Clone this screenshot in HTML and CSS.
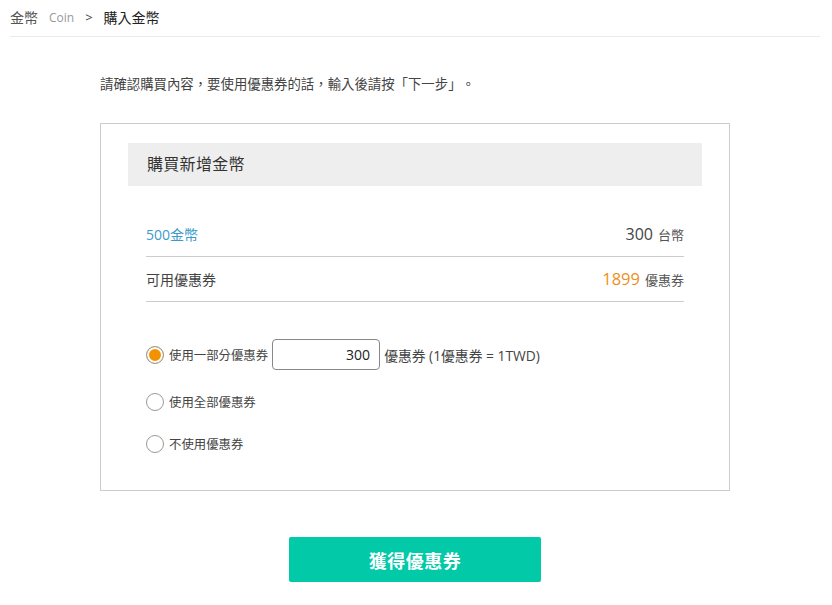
FILE: index.html
```html
<!DOCTYPE html>
<html lang="zh-Hant">
<head>
<meta charset="utf-8">
<title>購入金幣</title>
<link rel="stylesheet" href="styles.css">
</head>
<body>
<nav class="breadcrumb">
  <span class="crumb">金幣</span>
  <span class="crumb crumb-en">Coin</span>
  <span class="crumb crumb-sep">&gt;</span>
  <span class="crumb crumb-current">購入金幣</span>
</nav>
<main class="content">
  <p class="intro">請確認購買內容，要使用優惠券的話，輸入後請按「下一步」。</p>
  <section class="box">
    <h2 class="box-title">購買新增金幣</h2>
    <div class="rows">
      <div class="row">
        <span class="row-label row-label-blue">500金幣</span>
        <span class="row-value"><span class="num">300</span> <span class="unit">台幣</span></span>
      </div>
      <div class="row">
        <span class="row-label">可用優惠券</span>
        <span class="row-value"><span class="num num-orange">1899</span> <span class="unit">優惠券</span></span>
      </div>
    </div>
    <div class="options">
      <label class="option option-first">
        <input class="radio" type="radio" name="coupon" checked>
        <span class="opt-text">使用一部分優惠券</span>
        <input class="amount" type="text" value="300">
        <span class="opt-text opt-note">優惠券 (1優惠券 = 1TWD)</span>
      </label>
      <label class="option">
        <input class="radio" type="radio" name="coupon">
        <span class="opt-text">使用全部優惠券</span>
      </label>
      <label class="option">
        <input class="radio" type="radio" name="coupon">
        <span class="opt-text">不使用優惠券</span>
      </label>
    </div>
  </section>
  <div class="actions">
    <button class="btn" type="button">獲得優惠券</button>
  </div>
</main>
</body>
</html>
```

FILE: styles.css
```css
* { box-sizing: border-box; }

body {
  margin: 0;
  background: #fff;
  color: #444;
  font-family: "Open Sans", "Noto Sans CJK TC", sans-serif;
  font-size: 14px;
  text-spacing-trim: space-all;
}

.breadcrumb {
  display: flex;
  align-items: center;
  height: 37px;
  margin: 0 12px 0 10px;
  padding-bottom: 2px;
  border-bottom: 1px solid #ebebeb;
}

.crumb {
  font-size: 14px;
  color: #555;
  margin-right: 11px;
}

.crumb-en {
  font-size: 12px;
  color: #999;
}

.crumb-sep {
  font-size: 13px;
  color: #444;
}

.crumb-current {
  color: #222;
  font-weight: 400;
}

.content {
  padding-left: 100px;
}

.intro {
  margin: 37px 0 29px;
  font-size: 13.4px;
  line-height: 20px;
  color: #444;
}

.box {
  width: 630px;
  border: 1px solid #ccc;
  padding: 19px 27px 36px;
}

.box-title {
  margin: 0;
  height: 43px;
  line-height: 43px;
  padding-left: 19px;
  background: #eeeeee;
  font-size: 16px;
  font-weight: 400;
  color: #333;
  letter-spacing: 0.3px;
}

.rows {
  margin: 26px 18px 0;
}

.row {
  display: flex;
  justify-content: space-between;
  align-items: center;
  height: 45px;
  padding-bottom: 1px;
  border-bottom: 1px solid #ccc;
}

.row-label {
  font-size: 14px;
  color: #444;
}

.row-label-blue {
  color: #3d9bc8;
}

.row-value {
  display: flex;
  align-items: baseline;
  gap: 5px;
}

.num {
  font-size: 16px;
  color: #444;
}

.num-orange {
  color: #ee8f1c;
  font-size: 16.5px;
  font-weight: 500;
}

.unit {
  font-size: 13px;
  color: #555;
}

.options {
  margin: 37px 18px 0;
  display: flex;
  flex-direction: column;
  gap: 22px;
}

.option {
  display: flex;
  align-items: center;
  height: 20px;
}

.option-first {
  height: 31px;
}

.radio {
  appearance: none;
  -webkit-appearance: none;
  width: 18px;
  height: 18px;
  margin: 0 5px 0 0;
  border: 1px solid #999;
  border-radius: 50%;
  background: #fff;
  flex: none;
}

.radio:checked {
  background: #f39200;
  box-shadow: inset 0 0 0 2px #fff;
}

.opt-text {
  font-size: 12.4px;
  color: #444;
}

.opt-note {
  font-size: 13.8px;
}

.amount {
  width: 108px;
  height: 31px;
  margin: 0 4px 0 4px;
  padding: 0 9px;
  border: 1px solid #888;
  border-radius: 4px;
  font-family: "Open Sans", sans-serif;
  font-size: 14px;
  color: #222;
  text-align: right;
}

.actions {
  width: 630px;
  display: flex;
  justify-content: center;
  margin-top: 46px;
}

.btn {
  width: 252px;
  height: 45px;
  border: none;
  border-radius: 2px;
  background: #02c9a7;
  color: #fff;
  font-family: "Noto Sans CJK TC", sans-serif;
  font-size: 18px;
  font-weight: 700;
  letter-spacing: 0.5px;
}
```
